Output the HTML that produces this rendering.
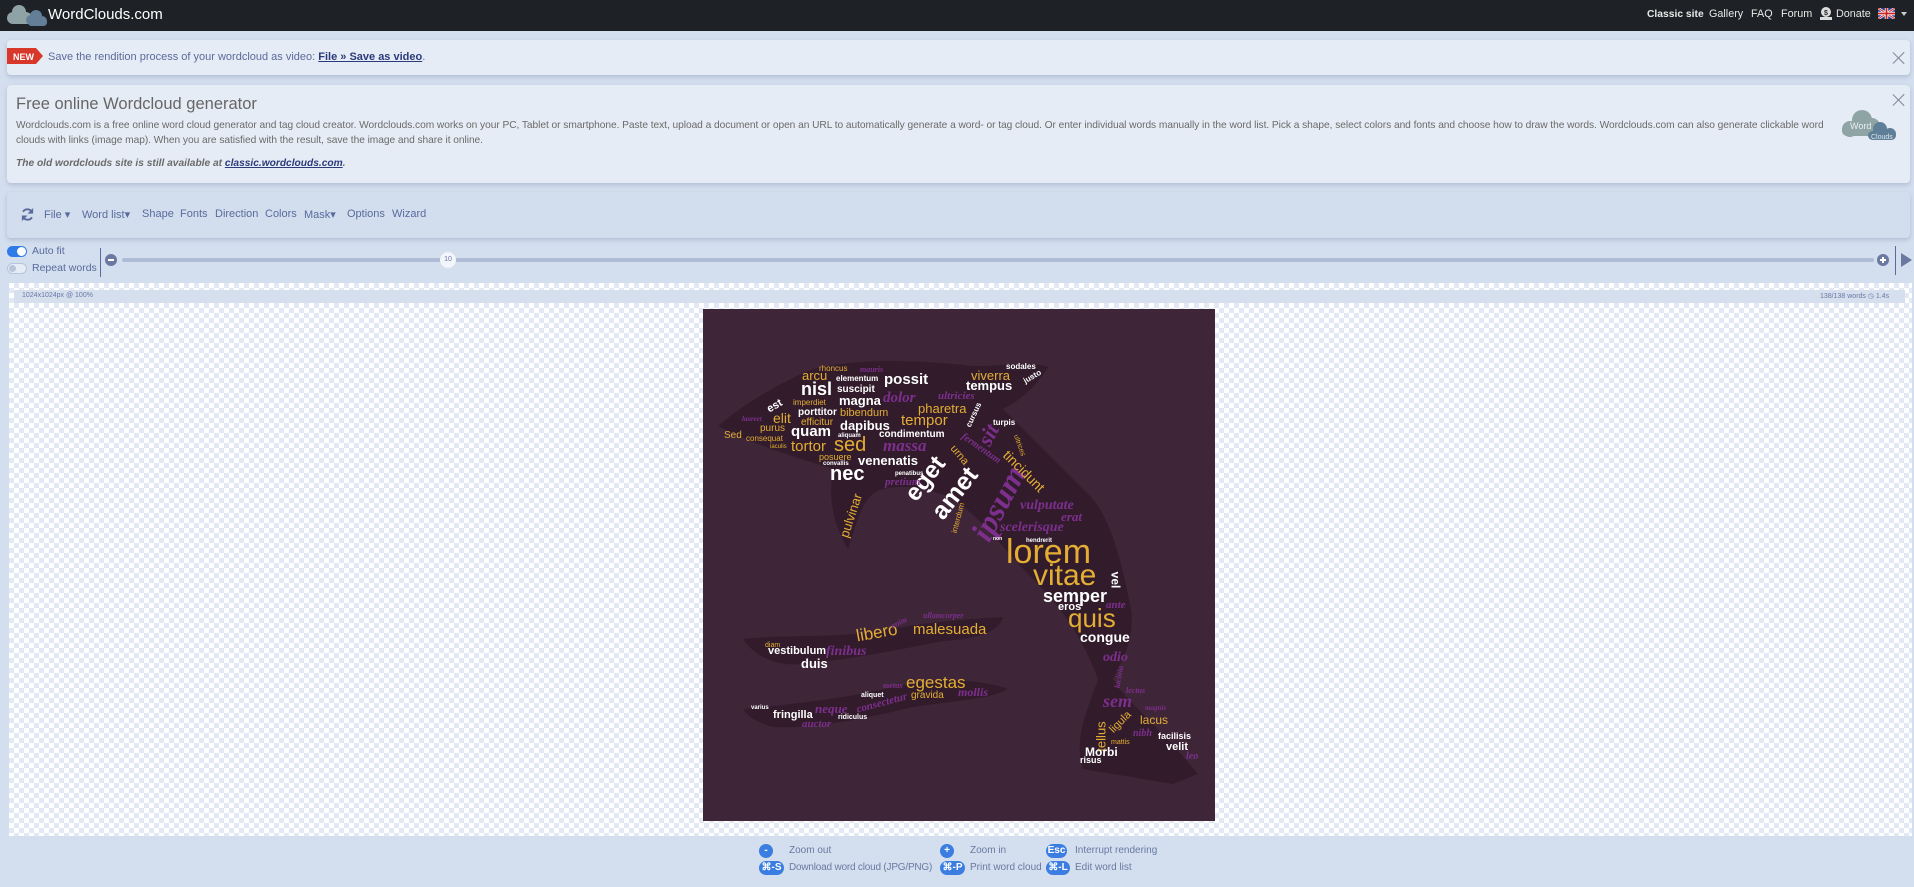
<!DOCTYPE html>
<html><head><meta charset="utf-8"><style>
*{box-sizing:border-box;margin:0;padding:0}
body{width:1914px;height:887px;overflow:hidden;background:#d3deee;font-family:"Liberation Sans",sans-serif;position:relative}
.abs{position:absolute}
.nav{left:0;top:0;width:1914px;height:31px;background:#1e2125}
.nav .r{position:absolute;top:8px;font-size:10.8px;color:#e8e8e8}
.box{position:absolute;background:#e6ecf5;border-radius:4px;box-shadow:0 2px 4px rgba(80,100,140,.25)}
.x{position:absolute;width:12px;height:12px}
.x:before,.x:after{content:"";position:absolute;left:5px;top:-2px;width:1.3px;height:16px;background:#7a8398;transform:rotate(45deg)}
.x:after{transform:rotate(-45deg)}
.tb{position:absolute;top:208px;font-size:11px;color:#5a6a9c}
.checker{left:9px;top:283px;width:1903px;height:553px;background-color:#fff;background-image:linear-gradient(45deg,#e2e9f4 25%,transparent 25%,transparent 75%,#e2e9f4 75%),linear-gradient(45deg,#e2e9f4 25%,transparent 25%,transparent 75%,#e2e9f4 75%);background-size:10px 10px;background-position:0 0,5px 5px}
.img{left:703px;top:309px;width:512px;height:512px;background:#3e2538;overflow:hidden}
.img span{position:absolute;line-height:1;white-space:nowrap}
.w{color:#fff;font-weight:bold}
.g{color:#e4ae34}
.p{color:#7d2f8d;font-style:italic;font-weight:bold;font-family:"Liberation Serif",serif}
.f{position:absolute;font-size:10px;color:#6a78a2}
.bd{position:absolute;height:14px;background:#3b7de0;color:#fff;border-radius:7px;font-size:10px;text-align:center;line-height:14px;font-weight:bold}
</style></head><body>
<div class="abs nav">
 <svg class="abs" style="left:6px;top:3px" width="44" height="24" viewBox="0 0 44 24"><g fill="#8fa3a6"><circle cx="13" cy="9" r="7"/><circle cx="7" cy="15" r="6"/><circle cx="20" cy="15" r="6"/><rect x="4" y="13" width="24" height="8" rx="4"/></g><g fill="#637e97"><circle cx="30" cy="13" r="6"/><circle cx="25" cy="17" r="5"/><circle cx="36" cy="18" r="5"/><rect x="22" y="16" width="19" height="7" rx="3.5"/></g></svg>
 <div class="abs" style="left:48px;top:6px;font-size:15px;color:#fff">WordClouds.com</div>
 <div class="r" style="left:1647px;font-weight:bold;font-size:10.3px;top:9px">Classic site</div>
 <div class="r" style="left:1709px">Gallery</div>
 <div class="r" style="left:1751px">FAQ</div>
 <div class="r" style="left:1781px">Forum</div>
 <svg class="abs" style="left:1819px;top:6px" width="14" height="14" viewBox="0 0 14 14"><circle cx="7" cy="6" r="5" fill="#ddd"/><text x="7" y="9" font-size="7" text-anchor="middle" fill="#1e2125" font-family="Liberation Sans" font-weight="bold">$</text><rect x="1" y="11" width="12" height="3" fill="#ddd"/></svg>
 <div class="r" style="left:1836px">Donate</div>
 <svg class="abs" style="left:1878px;top:8px" width="17" height="11" viewBox="0 0 17 11"><rect width="17" height="11" fill="#2a3a8a"/><path d="M0 0L17 11M17 0L0 11" stroke="#fff" stroke-width="2.4"/><path d="M0 0L17 11M17 0L0 11" stroke="#c22" stroke-width="1"/><path d="M8.5 0V11M0 5.5H17" stroke="#fff" stroke-width="3.4"/><path d="M8.5 0V11M0 5.5H17" stroke="#c22" stroke-width="1.8"/></svg>
 <div class="abs" style="left:1901px;top:12px;border:3.5px solid transparent;border-top:4px solid #ccc"></div>
</div>

<div class="box" style="left:7px;top:40px;width:1903px;height:35px">
 <svg class="abs" style="left:0;top:8px" width="37" height="16" viewBox="0 0 37 16"><path d="M0 0H29L36 8L29 16H0Z" fill="#d8382a"/><text x="6" y="12" font-size="9" font-weight="bold" fill="#fff" font-family="Liberation Sans">NEW</text></svg>
 <div class="abs" style="left:41px;top:11px;font-size:11px;color:#5a6a9c">Save the rendition process of your wordcloud as video: <b style="color:#2b3a7a;text-decoration:underline">File » Save as video</b>.</div>
 <div class="x" style="left:1886px;top:12px"></div>
</div>

<div class="box" style="left:7px;top:85px;width:1903px;height:98px">
 <div class="abs" style="left:9px;top:10px;font-size:16.5px;color:#666">Free online Wordcloud generator</div>
 <div class="abs" style="left:9px;top:33px;width:1830px;font-size:10.2px;line-height:15px;color:#6a6a6a;letter-spacing:-0.05px">Wordclouds.com is a free online word cloud generator and tag cloud creator. Wordclouds.com works on your PC, Tablet or smartphone. Paste text, upload a document or open an URL to automatically generate a word- or tag cloud. Or enter individual words manually in the word list. Pick a shape, select colors and fonts and choose how to draw the words. Wordclouds.com can also generate clickable word clouds with links (image map). When you are satisfied with the result, save the image and share it online.</div>
 <div class="abs" style="left:9px;top:73px;font-size:10.2px;color:#6a6a6a;font-style:italic;font-weight:bold">The old wordclouds site is still available at <span style="color:#2b3a7a;text-decoration:underline">classic.wordclouds.com</span>.</div>
 <div class="x" style="left:1886px;top:9px"></div>
 <svg class="abs" style="left:1833px;top:24px" width="58" height="32" viewBox="0 0 58 32"><g fill="#8fa5a5"><circle cx="22" cy="11" r="10"/><circle cx="10" cy="20" r="8"/><circle cx="32" cy="17" r="8"/><rect x="2" y="17" width="36" height="10" rx="5"/></g><g fill="#5f7f98"><circle cx="40" cy="20" r="7"/><circle cx="50" cy="25" r="6"/><rect x="28" y="22" width="28" height="9" rx="4.5"/></g><text x="10" y="20" font-size="9" fill="#e8eef0" font-family="Liberation Sans">Word</text><text x="31" y="30" font-size="7" fill="#dde6ee" font-family="Liberation Sans">Clouds</text></svg>
</div>

<div class="box" style="left:7px;top:192px;width:1903px;height:46px;background:#d2deee"></div>
<svg class="abs" style="left:20px;top:207px" width="15" height="15" viewBox="0 0 16 16"><path d="M13 6A5.5 5.5 0 0 0 3.2 5M3 10A5.5 5.5 0 0 0 12.8 11" stroke="#5a6a9c" stroke-width="2" fill="none"/><path d="M14 1V7H8Z M2 15V9H8Z" fill="#5a6a9c"/></svg>
<div class="tb" style="left:44px">File ▾</div>
<div class="tb" style="left:82px">Word list▾</div>
<div class="tb" style="left:142px">Shape</div>
<div class="tb" style="left:180px">Fonts</div>
<div class="tb" style="left:215px">Direction</div>
<div class="tb" style="left:265px">Colors</div>
<div class="tb" style="left:304px">Mask▾</div>
<div class="tb" style="left:347px">Options</div>
<div class="tb" style="left:392px">Wizard</div>

<div class="abs" style="left:7px;top:246px;width:20px;height:11px;border-radius:6px;background:#2f7be8"></div>
<div class="abs" style="left:17px;top:247px;width:9px;height:9px;border-radius:50%;background:#fff"></div>
<div class="abs" style="left:7px;top:263px;width:20px;height:11px;border-radius:6px;background:#e6ecf5;border:1px solid #b8c4d8"></div>
<div class="abs" style="left:9px;top:265px;width:7px;height:7px;border-radius:50%;background:#b8c4d8"></div>
<div class="abs" style="left:32px;top:245px;font-size:10.5px;color:#5a6a9c">Auto fit</div>
<div class="abs" style="left:32px;top:262px;font-size:10.5px;color:#5a6a9c">Repeat words</div>
<div class="abs" style="left:100px;top:248px;width:1px;height:29px;background:#5a6a9c"></div>
<div class="abs" style="left:105px;top:254px;width:12px;height:12px;border-radius:50%;background:#6a78a2"></div>
<div class="abs" style="left:108px;top:259px;width:6px;height:2px;background:#fff"></div>
<div class="abs" style="left:122px;top:258px;width:1752px;height:4px;border-radius:2px;background:#aebcd6"></div>
<div class="abs" style="left:440px;top:252px;width:16px;height:16px;border-radius:50%;background:#f2f5fa;font-size:7px;color:#6a78a2;text-align:center;line-height:16px">10</div>
<div class="abs" style="left:1877px;top:254px;width:12px;height:12px;border-radius:50%;background:#6a78a2"></div>
<div class="abs" style="left:1880px;top:259px;width:6px;height:2px;background:#fff"></div>
<div class="abs" style="left:1882px;top:257px;width:2px;height:6px;background:#fff"></div>
<div class="abs" style="left:1895px;top:246px;width:1px;height:29px;background:#5a6a9c"></div>
<div class="abs" style="left:1901px;top:253px;border-left:11px solid #6a78a2;border-top:7px solid transparent;border-bottom:7px solid transparent"></div>

<div class="abs checker"></div>
<div class="abs" style="left:14px;top:290px;width:1891px;height:13px;background:#d5dfee"></div>
<div class="abs" style="left:22px;top:292px;font-size:7px;color:#6a78a2">1024x1024px @ 100%</div>
<div class="abs" style="left:1820px;top:292px;font-size:7px;color:#6a78a2">138/138 words ◷ 1.4s</div>

<div class="abs img">
<svg class="abs" style="left:0;top:0" width="512" height="512" viewBox="0 0 512 512"><g fill="#321c2c">
<path d="M15 117C40 95 80 72 110 60C160 48 220 52 260 56C290 60 320 50 345 58C335 75 320 90 300 100C330 130 360 160 390 190C410 215 420 260 428 300C432 330 420 350 410 370C425 395 450 410 495 465L470 475L380 460C370 430 385 400 395 370C380 330 360 300 330 270C300 240 280 210 250 190C230 180 200 175 180 180C160 185 155 210 145 240C130 215 125 190 130 160C100 150 60 140 15 117Z"/>
<path d="M40 330C80 325 140 330 190 320C230 312 270 310 300 308C295 325 270 330 240 332C200 340 150 350 100 355C70 358 50 345 40 330Z"/>
<path d="M40 400C90 395 140 390 190 378C230 370 270 368 305 380C290 390 250 392 210 398C160 410 110 420 70 418C55 414 45 408 40 400Z"/>
</g></svg>
<span class="g" style="left:116px;top:56px;font-size:8px">rhoncus</span>
<span class="p" style="left:157px;top:57px;font-size:8px">mauris</span>
<span class="g" style="left:99px;top:60px;font-size:13px">arcu</span>
<span class="w" style="left:133px;top:66px;font-size:8px">elementum</span>
<span class="w" style="left:181px;top:63px;font-size:15px">possit</span>
<span class="w" style="left:98px;top:71px;font-size:18px">nisl</span>
<span class="w" style="left:134px;top:76px;font-size:10px">suscipit</span>
<span class="w" style="left:64px;top:92px;font-size:11px;transform:rotate(-30deg)">est</span>
<span class="g" style="left:90px;top:90px;font-size:8px">imperdiet</span>
<span class="w" style="left:136px;top:85px;font-size:13px">magna</span>
<span class="p" style="left:180px;top:82px;font-size:15px">dolor</span>
<span class="p" style="left:235px;top:82px;font-size:11px">ultricies</span>
<span class="g" style="left:268px;top:60px;font-size:13px">viverra</span>
<span class="w" style="left:263px;top:70px;font-size:13px">tempus</span>
<span class="w" style="left:303px;top:54px;font-size:8px">sodales</span>
<span class="w" style="left:320px;top:64px;font-size:8px;transform:rotate(-30deg)">justo</span>
<span class="g" style="left:215px;top:93px;font-size:13px">pharetra</span>
<span class="g" style="left:70px;top:102px;font-size:14px">elit</span>
<span class="w" style="left:95px;top:99px;font-size:10px">porttitor</span>
<span class="g" style="left:137px;top:99px;font-size:11px">bibendum</span>
<span class="g" style="left:198px;top:104px;font-size:15px">tempor</span>
<span class="g" style="left:98px;top:109px;font-size:10px">efficitur</span>
<span class="w" style="left:137px;top:110px;font-size:13px">dapibus</span>
<span class="p" style="left:39px;top:107px;font-size:7px">laoreet</span>
<span class="g" style="left:57px;top:115px;font-size:10px">purus</span>
<span class="w" style="left:88px;top:115px;font-size:15px">quam</span>
<span class="w" style="left:176px;top:121px;font-size:10px">condimentum</span>
<span class="g" style="left:21px;top:122px;font-size:10px">Sed</span>
<span class="g" style="left:43px;top:126px;font-size:8px">consequat</span>
<span class="w" style="left:135px;top:124px;font-size:6px">aliquam</span>
<span class="g" style="left:88px;top:130px;font-size:15px">tortor</span>
<span class="g" style="left:131px;top:126px;font-size:20px">sed</span>
<span class="p" style="left:180px;top:128px;font-size:17px">massa</span>
<span class="g" style="left:67px;top:135px;font-size:6px">iaculis</span>
<span class="g" style="left:116px;top:144px;font-size:9px">posuere</span>
<span class="w" style="left:120px;top:152px;font-size:6px">convallis</span>
<span class="w" style="left:155px;top:145px;font-size:13px">venenatis</span>
<span class="w" style="left:127px;top:155px;font-size:20px">nec</span>
<span class="w" style="left:290px;top:110px;font-size:8px">turpis</span>
<span class="w" style="left:258px;top:102px;font-size:8px;transform:rotate(-65deg)">cursus</span>
<span class="w" style="left:198px;top:158px;font-size:24px;transform:rotate(-52deg)">eget</span>
<span class="w" style="left:223px;top:172px;font-size:25px;transform:rotate(-52deg)">amet</span>
<span class="p" style="left:255px;top:178px;font-size:32px;transform:rotate(-62deg)">ipsum</span>
<span class="p" style="left:275px;top:115px;font-size:22px;transform:rotate(-62deg)">sit</span>
<span class="g" style="left:245px;top:141px;font-size:11px;transform:rotate(50deg)">urna</span>
<span class="p" style="left:255px;top:135px;font-size:10px;transform:rotate(35deg)">fermentum</span>
<span class="g" style="left:295px;top:155px;font-size:14px;transform:rotate(45deg)">tincidunt</span>
<span class="g" style="left:305px;top:133px;font-size:7px;transform:rotate(70deg)">ultrices</span>
<span class="p" style="left:317px;top:190px;font-size:14px">vulputate</span>
<span class="p" style="left:297px;top:212px;font-size:14px">scelerisque</span>
<span class="p" style="left:358px;top:201px;font-size:13px">erat</span>
<span class="g" style="left:125px;top:200px;font-size:13px;transform:rotate(-72deg)">pulvinar</span>
<span class="g" style="left:240px;top:205px;font-size:8px;transform:rotate(-75deg)">interdum</span>
<span class="p" style="left:182px;top:168px;font-size:11px">pretium</span>
<span class="w" style="left:192px;top:162px;font-size:6px">penatibus</span>
<span class="w" style="left:290px;top:228px;font-size:5px">non</span>
<span class="w" style="left:323px;top:229px;font-size:6px">hendrerit</span>
<span class="g" style="left:303px;top:226px;font-size:34px">lorem</span>
<span class="g" style="left:330px;top:252px;font-size:30px">vitae</span>
<span class="w" style="left:404px;top:265px;font-size:12px;transform:rotate(90deg)">vel</span>
<span class="w" style="left:340px;top:278px;font-size:18px">semper</span>
<span class="w" style="left:355px;top:293px;font-size:11px">eros</span>
<span class="p" style="left:403px;top:291px;font-size:11px">ante</span>
<span class="g" style="left:365px;top:296px;font-size:26px">quis</span>
<span class="w" style="left:377px;top:321px;font-size:14px">congue</span>
<span class="p" style="left:400px;top:342px;font-size:14px">odio</span>
<span class="g" style="left:153px;top:315px;font-size:17px;transform:rotate(-10deg)">libero</span>
<span class="g" style="left:210px;top:313px;font-size:15px">malesuada</span>
<span class="p" style="left:220px;top:303px;font-size:8px">ullamcorper</span>
<span class="p" style="left:188px;top:310px;font-size:8px;transform:rotate(-25deg)">enim</span>
<span class="g" style="left:62px;top:333px;font-size:7px">diam</span>
<span class="w" style="left:65px;top:337px;font-size:11px">vestibulum</span>
<span class="p" style="left:123px;top:336px;font-size:14px">finibus</span>
<span class="w" style="left:98px;top:348px;font-size:13px">duis</span>
<span class="g" style="left:203px;top:365px;font-size:17px">egestas</span>
<span class="p" style="left:180px;top:373px;font-size:8px">metus</span>
<span class="p" style="left:255px;top:377px;font-size:12px">mollis</span>
<span class="g" style="left:208px;top:382px;font-size:10px">gravida</span>
<span class="w" style="left:158px;top:383px;font-size:7px">aliquet</span>
<span class="p" style="left:153px;top:389px;font-size:11px;transform:rotate(-15deg)">consectetur</span>
<span class="p" style="left:112px;top:393px;font-size:13px">neque</span>
<span class="w" style="left:48px;top:396px;font-size:6px">varius</span>
<span class="w" style="left:70px;top:401px;font-size:11px">fringilla</span>
<span class="w" style="left:135px;top:405px;font-size:7px">ridiculus</span>
<span class="p" style="left:99px;top:410px;font-size:11px">auctor</span>
<span class="p" style="left:400px;top:383px;font-size:18px">sem</span>
<span class="p" style="left:423px;top:378px;font-size:8px">lectus</span>
<span class="p" style="left:405px;top:364px;font-size:8px;transform:rotate(-80deg)">lacinia</span>
<span class="g" style="left:383px;top:421px;font-size:13px;transform:rotate(-90deg)">tellus</span>
<span class="g" style="left:405px;top:408px;font-size:11px;transform:rotate(-45deg)">ligula</span>
<span class="p" style="left:442px;top:396px;font-size:7px">magnis</span>
<span class="g" style="left:437px;top:405px;font-size:12px">lacus</span>
<span class="p" style="left:430px;top:420px;font-size:10px">nibh</span>
<span class="g" style="left:408px;top:430px;font-size:7px">mattis</span>
<span class="w" style="left:455px;top:423px;font-size:9px">facilisis</span>
<span class="w" style="left:382px;top:437px;font-size:12px">Morbi</span>
<span class="w" style="left:463px;top:433px;font-size:11px">velit</span>
<span class="w" style="left:377px;top:447px;font-size:9px">risus</span>
<span class="p" style="left:483px;top:443px;font-size:10px">leo</span>
</div>

<div class="abs" style="left:0;top:836px;width:1914px;height:51px;background:#d3dfee"></div>
<div class="bd" style="left:759px;top:844px;width:14px">-</div><div class="f" style="left:789px;top:845px">Zoom out</div>
<div class="bd" style="left:940px;top:844px;width:14px">+</div><div class="f" style="left:970px;top:845px">Zoom in</div>
<div class="bd" style="left:1046px;top:844px;width:21px">Esc</div><div class="f" style="left:1075px;top:845px">Interrupt rendering</div>
<div class="bd" style="left:759px;top:861px;width:25px">⌘-S</div><div class="f" style="left:789px;top:862px;letter-spacing:-0.2px">Download word cloud (JPG/PNG)</div>
<div class="bd" style="left:940px;top:861px;width:25px">⌘-P</div><div class="f" style="left:970px;top:862px">Print word cloud</div>
<div class="bd" style="left:1046px;top:861px;width:24px">⌘-L</div><div class="f" style="left:1075px;top:862px">Edit word list</div>
</body></html>
